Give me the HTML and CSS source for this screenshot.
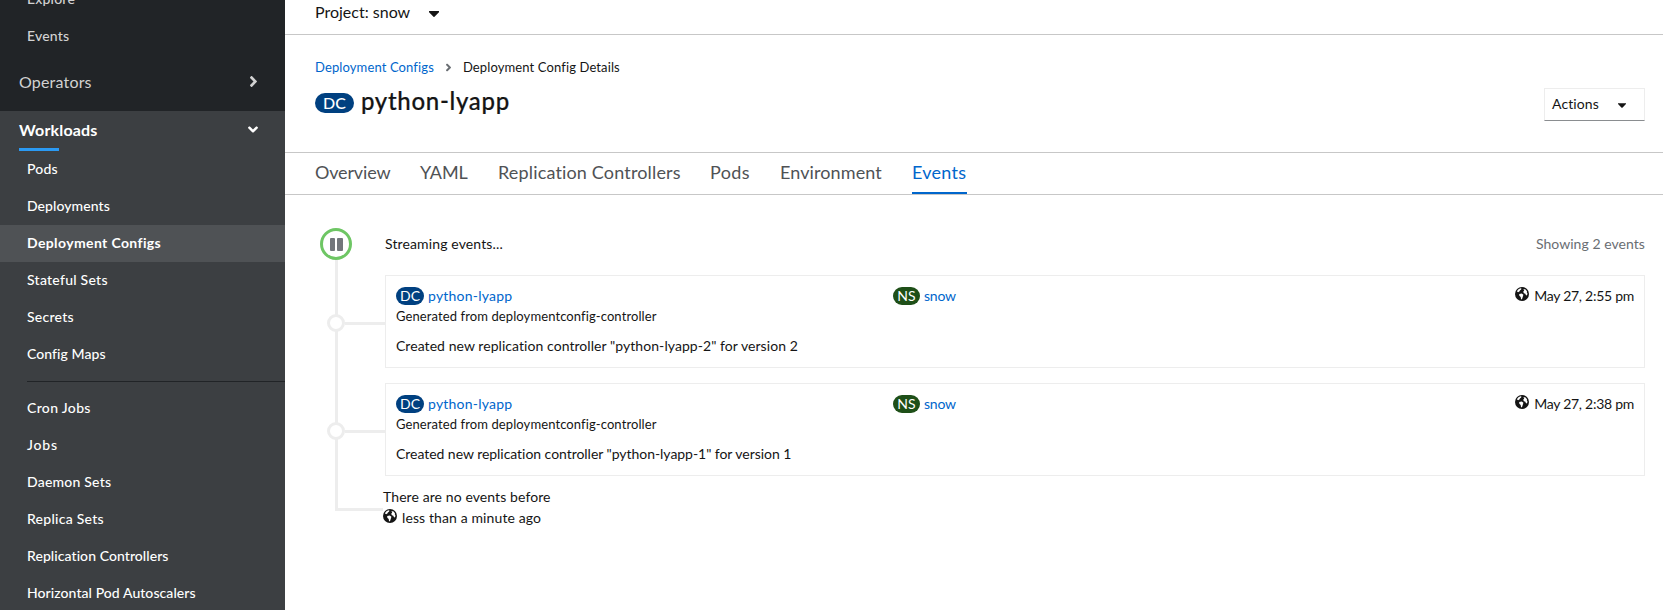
FILE: index.html
```html
<!DOCTYPE html>
<html lang="en">
<head>
<meta charset="utf-8">
<title>python-lyapp · Events</title>
<link rel="stylesheet" href="styles.css">
</head>
<body>
<svg width="0" height="0" class="defs">
  <symbol id="caret" viewBox="16 192 288 169"><path d="M31.3 192h257.3c17.8 0 26.7 21.5 14.1 34.1L174.1 354.8c-7.8 7.8-20.5 7.8-28.3 0L17.2 226.1C4.6 213.5 13.5 192 31.3 192z"/></symbol>
  <symbol id="angle" viewBox="24 96 208 320"><path d="M224.3 273l-136 136c-9.4 9.4-24.6 9.4-33.9 0l-22.6-22.6c-9.4-9.4-9.4-24.6 0-33.9l96.4-96.4-96.4-96.4c-9.4-9.4-9.4-24.6 0-33.9L54.3 103c9.4-9.4 24.6-9.4 33.9 0l136 136c9.5 9.4 9.5 24.6.1 34z"/></symbol>
  <symbol id="globe" viewBox="0 0 14 14"><circle cx="7" cy="7" r="7"/><path fill="#fff" d="M1.9 4.2 3.2 2.4 5.3 1.3 6.6 1.7 5.9 2.8 4.9 3.4 4.4 4.6 3.1 5.2zM4.2 6.9 6.8 6.6 8.4 7.8 7.8 9.8 6.9 12.4 6 12 5.7 10 4.3 8.7zM8.4 2 10.6 2.6 12.1 4.6 11.7 5 12.5 6.8 11.9 8.6 10.8 8 10.4 6.7 8.9 6.2 8.2 4.7 9.2 3.5z"/></symbol>
</svg>
<div class="app">
  <nav class="sidebar">
    <ul class="links">
      <li>Explore</li>
      <li>Events</li>
    </ul>
    <div class="group">Operators<svg class="chev"><use href="#angle"/></svg></div>
    <section class="open">
      <div class="group current">Workloads<svg class="chev down" viewBox="0 0 10 6.5"><g transform="translate(10 0) rotate(90)"><use href="#angle" width="6.5" height="10"/></g></svg></div>
      <ul class="links">
        <li class="ls-s">Pods</li>
        <li>Deployments</li>
        <li class="active">Deployment Configs</li>
        <li class="ls-m">Stateful Sets</li>
        <li class="ls-m">Secrets</li>
        <li>Config Maps</li>
        <li class="divider"></li>
        <li class="ls-l">Cron Jobs</li>
        <li class="ls-xl">Jobs</li>
        <li class="ls-s">Daemon Sets</li>
        <li class="ls-m">Replica Sets</li>
        <li>Replication Controllers</li>
        <li>Horizontal Pod Autoscalers</li>
      </ul>
    </section>
  </nav>
  <main class="main">
    <div class="project">Project: snow<svg class="caret"><use href="#caret"/></svg></div>
    <header class="head">
      <div>
        <div class="crumbs"><a>Deployment Configs</a><svg class="sep"><use href="#angle"/></svg><span>Deployment Config Details</span></div>
        <h1><span class="pill dc">DC</span><span class="name">python-lyapp</span></h1>
      </div>
      <button class="actions">Actions<svg class="caret"><use href="#caret"/></svg></button>
    </header>
    <div class="tabs">
      <span class="tab overview">Overview</span><span class="tab yaml">YAML</span><span class="tab rc">Replication Controllers</span><span class="tab pods">Pods</span><span class="tab env">Environment</span><span class="tab events selected">Events</span>
    </div>
    <div class="stream">
      <div class="status">
        <span class="pause"><i></i><i></i></span>
        <span class="streaming">Streaming events...</span>
        <span class="count">Showing 2 events</span>
      </div>
      <div class="timeline">
        <article class="event">
          <div class="row">
            <div class="res"><span class="pill dc">DC</span><a>python-lyapp</a></div>
            <div class="ns"><span class="pill nsp">NS</span><a>snow</a></div>
            <div class="time"><svg class="globe"><use href="#globe"/></svg><span>May 27, 2:55 pm</span></div>
          </div>
          <div class="from">Generated from deploymentconfig-controller</div>
          <div class="msg">Created new replication controller "python-lyapp-2" for version 2</div>
        </article>
        <article class="event">
          <div class="row">
            <div class="res"><span class="pill dc">DC</span><a>python-lyapp</a></div>
            <div class="ns"><span class="pill nsp">NS</span><a>snow</a></div>
            <div class="time"><svg class="globe"><use href="#globe"/></svg><span>May 27, 2:38 pm</span></div>
          </div>
          <div class="from">Generated from deploymentconfig-controller</div>
          <div class="msg tight">Created new replication controller "python-lyapp-1" for version 1</div>
        </article>
        <div class="end">
          <div class="before">There are no events before</div>
          <div class="ago"><svg class="globe"><use href="#globe"/></svg><span>less than a minute ago</span></div>
        </div>
      </div>
    </div>
  </main>
</div>
</body>
</html>
```
FILE: styles.css
```css
*, *::before, *::after { box-sizing: border-box; }
body { margin: 0; font: 14px/21px Lato, "Open Sans", sans-serif; color: #151515; background: #fff; }
ul { list-style: none; margin: 0; padding: 0; }
svg { fill: currentColor; flex: none; display: block; }
.defs { position: absolute; }
a { color: #06c; }

.app { display: flex; height: 610px; overflow: hidden; }

.sidebar { width: 285px; flex: none; background: #212427; color: #d2d2d2; }
.sidebar > .links { margin: -19px 0 8px; }
.links li { height: 37px; padding-left: 27px; line-height: 36px; font-weight: 500; letter-spacing: .07px; }
.links .active { background: #4f5255; font-weight: 700; letter-spacing: .38px; }
.links .divider { height: 1px; margin: 8px 0 8px 27px; padding: 0; background: #212427; }
.links .ls-s { letter-spacing: .22px; }
.links .ls-m { letter-spacing: .26px; }
.links .ls-l { letter-spacing: .34px; }
.links .ls-xl { letter-spacing: .8px; }
.sidebar > .links li { letter-spacing: .2px; }
.group { display: flex; align-items: center; justify-content: space-between; height: 40px; padding: 0 28px 3px 19px; margin-bottom: 8px; font-size: 16px; letter-spacing: .18px; }
.chev { width: 7px; height: 11px; }
.chev.down { width: 10px; height: 7px; margin-right: -1px; }
.open { background: #3c3f42; color: #fff; height: 520px; }
.open .group { margin: 0; font-weight: 700; position: relative; }
.current::after { content: ""; position: absolute; left: 19px; top: 37px; width: 40px; height: 3px; background: #2b9af3; }

.main { flex: 1; min-width: 0; }
.project { display: flex; align-items: center; height: 35px; padding: 0 0 11px 30px; border-bottom: 1px solid #c7c7c7; font-size: 16px; }
.project .caret { width: 10px; height: 6px; margin: 4px 0 0 19px; }
.head { display: flex; justify-content: space-between; height: 117px; padding: 22px 18px 0 30px; }
.crumbs { display: flex; align-items: center; font-size: 13px; letter-spacing: .12px; }
.sep { width: 5px; height: 9px; margin: 0 12px; color: #6a6e73; }
h1 { display: flex; align-items: center; gap: 7px; margin: 7px 0 0; font-size: 24px; line-height: 32px; font-weight: 500; }
.name { letter-spacing: .68px; -webkit-text-stroke: .2px; }
.pill { display: flex; align-items: center; justify-content: center; color: #fff; border-radius: 20px; width: 28px; height: 18px; letter-spacing: 0; }
.dc { background: #004080; }
.nsp { background: #1e4f18; width: 27px; }
h1 .pill { width: 39px; height: 20px; margin-top: 4px; font-size: 16px; }
.actions { display: flex; align-items: center; justify-content: space-between; width: 101px; height: 33px; margin-top: 31px; padding: 0 18px 2px 7px; border: 1px solid #ededed; border-bottom-color: #8a8d90; background: #fff; font: inherit; color: inherit; letter-spacing: .1px; }
.actions .caret { width: 8px; height: 5px; margin-top: 4px; }
.tabs { display: flex; gap: 30px; height: 43px; padding-left: 30px; border: solid #c7c7c7; border-width: 1px 0; font-size: 18px; line-height: 38px; color: #4f5255; }
.tab { white-space: nowrap; }
.overview { width: 75px; letter-spacing: -.15px; }
.yaml { width: 48px; letter-spacing: -.1px; }
.rc { width: 182px; letter-spacing: .16px; }
.pods { width: 40px; letter-spacing: .35px; }
.env { width: 102px; letter-spacing: .1px; }
.events { width: 55px; letter-spacing: .25px; }
.selected { color: #06c; border-bottom: 2px solid #06c; }

.stream { padding: 33px 18px 0 35px; }
.status { display: flex; align-items: center; height: 32px; }
.pause { display: flex; align-items: center; justify-content: center; gap: 2px; width: 32px; height: 32px; border: 3px solid #6ec664; border-radius: 50%; }
.pause i { width: 5.5px; height: 13px; border-radius: 1px; background: #72767b; }
.streaming { margin: -2px 0 0 33px; letter-spacing: .13px; }
.count { margin: -2px 0 0 auto; color: #6a6e73; letter-spacing: .05px; }
.timeline { margin-left: 15px; border-left: 3px solid #ededed; padding: 15px 0 0 47px; height: 251px; position: relative; }
.timeline::after { content: ""; position: absolute; left: 0; bottom: 0; width: 45px; height: 3px; background: #ededed; }
.event { position: relative; height: 93px; margin-bottom: 15px; padding: 9px 10px 0; border: 1px solid #ededed; }
.event::before { content: ""; position: absolute; left: -41px; top: 46px; width: 40px; height: 3px; background: #ededed; }
.event::after { content: ""; position: absolute; left: -59px; top: 38px; width: 18px; height: 18px; border: 3px solid #ededed; border-radius: 50%; background: #fff; }
.row { display: grid; grid-template-columns: 497px 1fr auto; height: 22px; }
.res, .ns, .time { display: flex; align-items: center; gap: 4px; }
.row a, .time span { margin-top: -2px; }
.row .pill { line-height: 17px; align-items: flex-start; }
.res a { letter-spacing: .22px; }
.ns a { letter-spacing: -.2px; }
.time { gap: 5px; letter-spacing: -.27px; }
.globe { width: 14px; height: 14px; }
.time .globe { margin-bottom: 5px; }
.from { font-size: 13px; line-height: 19px; letter-spacing: .1px; }
.msg { margin-top: 9px; line-height: 21px; letter-spacing: .06px; }
.msg.tight { letter-spacing: -.04px; }
.end { margin: -5px 0 0 -2px; }
.end div { height: 21px; }
.before { letter-spacing: .09px; }
.ago { display: flex; align-items: center; gap: 5px; letter-spacing: .11px; }
.ago .globe { margin-bottom: 4px; position: relative; z-index: 1; }
```
